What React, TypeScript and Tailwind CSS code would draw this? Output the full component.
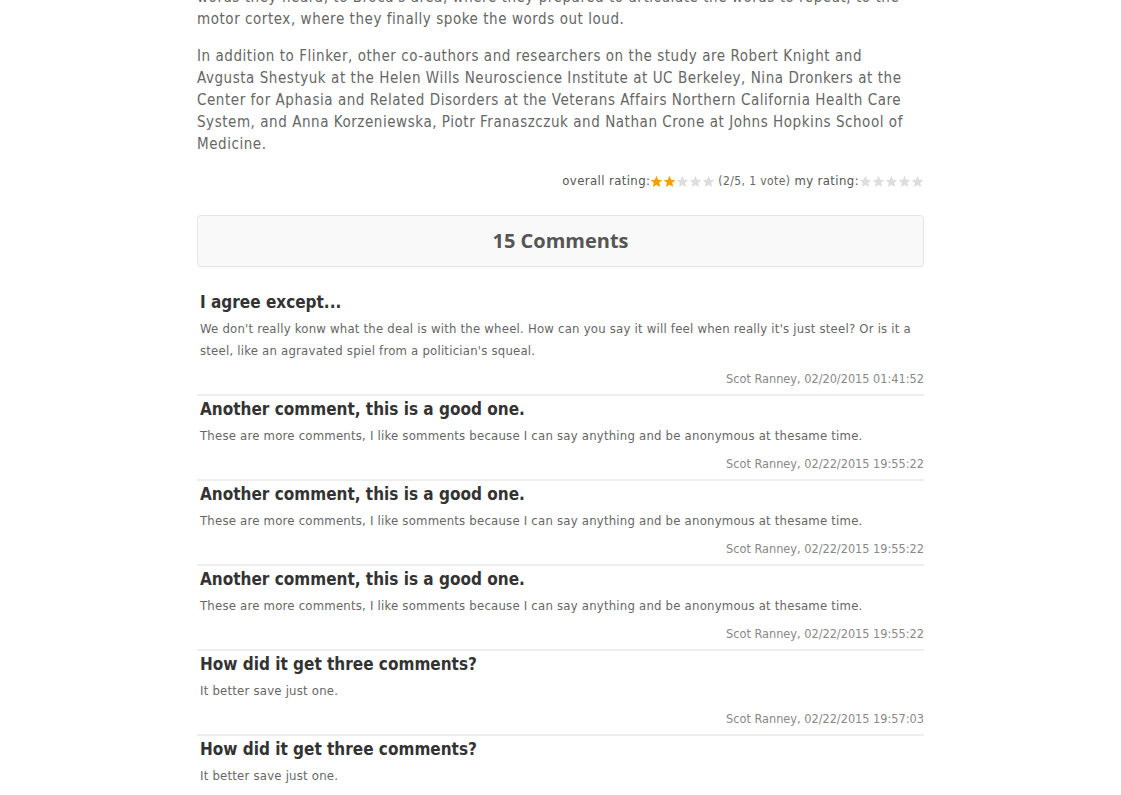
const comments = [
  {
    title: 'I agree except...',
    body: "We don't really konw what the deal is with the wheel. How can you say it will feel when really it's just steel? Or is it a steel, like an agravated spiel from a politician's squeal.",
    meta: 'Scot Ranney, 02/20/2015 01:41:52',
  },
  {
    title: 'Another comment, this is a good one.',
    body: 'These are more comments, I like somments because I can say anything and be anonymous at thesame time.',
    meta: 'Scot Ranney, 02/22/2015 19:55:22',
  },
  {
    title: 'Another comment, this is a good one.',
    body: 'These are more comments, I like somments because I can say anything and be anonymous at thesame time.',
    meta: 'Scot Ranney, 02/22/2015 19:55:22',
  },
  {
    title: 'Another comment, this is a good one.',
    body: 'These are more comments, I like somments because I can say anything and be anonymous at thesame time.',
    meta: 'Scot Ranney, 02/22/2015 19:55:22',
  },
  {
    title: 'How did it get three comments?',
    body: 'It better save just one.',
    meta: 'Scot Ranney, 02/22/2015 19:57:03',
  },
  {
    title: 'How did it get three comments?',
    body: 'It better save just one.',
    meta: 'Scot Ranney, 02/22/2015 19:57:03',
  },
];

function Star({ on }: { on: boolean }) {
  return (
    <svg viewBox="0 0 24 24" className="w-[13px] h-[13px]">
      <path
        d="M12 1.5l3.1 7.1 7.7.7-5.8 5.1 1.7 7.6L12 18l-6.7 4 1.7-7.6-5.8-5.1 7.7-.7z"
        fill={on ? '#f5a000' : '#dddddd'}
      />
    </svg>
  );
}

function Stars({ count }: { count: number }) {
  return (
    <span className="inline-flex items-center">
      {[0, 1, 2, 3, 4].map((i) => (
        <Star key={i} on={i < count} />
      ))}
    </span>
  );
}

export default function App() {
  return (
    <div className="min-h-screen bg-white overflow-hidden">
      <div className="w-[727px] mx-auto font-['DejaVu_Sans_Condensed','Liberation_Sans',sans-serif]">
        <p className="mt-[-14px] text-[15px] leading-[22px] tracking-[0.55px] text-[#666]">
          words they heard, to Broca's area, where they prepared to articulate the words to repeat, to the motor cortex, where they finally spoke the words out loud.
        </p>
        <p className="mt-[15px] text-[15px] leading-[22px] tracking-[0.55px] text-[#666]">
          In addition to Flinker, other co-authors and researchers on the study are Robert Knight and Avgusta Shestyuk at the Helen Wills Neuroscience Institute at UC Berkeley, Nina Dronkers at the Center for Aphasia and Related Disorders at the Veterans Affairs Northern California Health Care System, and Anna Korzeniewska, Piotr Franaszczuk and Nathan Crone at Johns Hopkins School of Medicine.
        </p>

        <div className="mt-[16px] flex items-center justify-end h-[20px] text-[13px] tracking-[0.4px] text-[#555]">
          <span>overall rating:</span>
          <Stars count={2} />
          <span className="ml-[3px] text-[12px] text-[#666]">(2/5, 1 vote)</span>
          <span className="ml-[4px]">my rating:</span>
          <Stars count={0} />
        </div>

        <div className="mt-[24px] h-[52px] flex items-center justify-center rounded-[4px] border border-[#e6e6e6] bg-[#f9f9f9] shadow-[0_1px_1px_rgba(0,0,0,0.04)]">
          <h2 className="font-['Open_Sans',sans-serif] font-bold text-[20px] text-[#555]">15 Comments</h2>
        </div>

        <div className="mt-[22px]">
          {comments.map((c, i) => (
            <div key={i} className="pt-[1px] pb-[5px] border-b-2 border-[#eeeeee]">
              <h3 className="px-[3px] font-bold text-[17px] leading-[24px] text-[#333]">{c.title}</h3>
              <p className="mt-[4px] px-[3px] text-[13px] leading-[22px] tracking-[0.22px] text-[#666]">{c.body}</p>
              <div className="mt-[7px] text-right text-[12.6px] leading-[20px] text-[#888]">{c.meta}</div>
            </div>
          ))}
        </div>
      </div>
    </div>
  );
}
